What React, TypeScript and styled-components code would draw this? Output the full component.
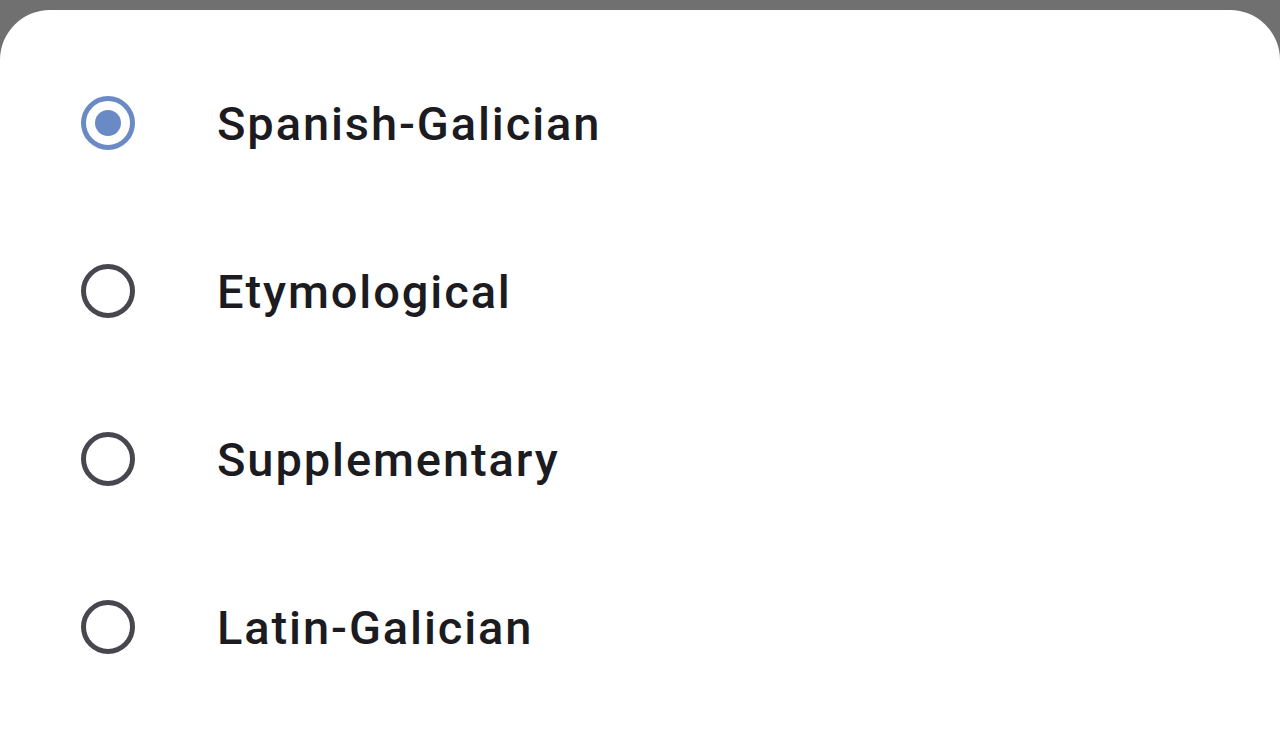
import React, { useState } from 'react';
import styled, { createGlobalStyle } from 'styled-components';

const GlobalStyle = createGlobalStyle`
  html, body {
    margin: 0;
    padding: 0;
    height: 100%;
    overflow: hidden;
    background: #707070;
  }
  #root {
    height: 100%;
  }
`;

const options = ['Spanish-Galician', 'Etymological', 'Supplementary', 'Latin-Galician'];

const Screen = styled.div`
  height: 100%;
  padding-top: 10px;
  box-sizing: border-box;
  display: flex;
  flex-direction: column;
`;

const Sheet = styled.div`
  flex: 1;
  background: #ffffff;
  border-radius: 50px 50px 0 0;
  padding-top: 29px;
  display: flex;
  flex-direction: column;
`;

const Row = styled.label`
  height: 168px;
  display: flex;
  align-items: center;
  padding-left: 81px;
  cursor: pointer;
`;

const Radio = styled.span<{ checked: boolean }>`
  width: 54px;
  height: 54px;
  box-sizing: border-box;
  border-radius: 50%;
  border: 5px solid ${p => (p.checked ? '#6a8ac6' : '#48464f')};
  display: flex;
  align-items: center;
  justify-content: center;
  flex-shrink: 0;
  margin-right: 82px;

  &::after {
    content: '';
    width: 26px;
    height: 26px;
    border-radius: 50%;
    background: #6a8ac6;
    display: ${p => (p.checked ? 'block' : 'none')};
  }
`;

const Label = styled.span`
  font-family: Roboto, 'Noto Sans', sans-serif;
  font-size: 47px;
  font-weight: 500;
  letter-spacing: 1.9px;
  color: #1c1b1f;
`;

export default function App() {
  const [selected, setSelected] = useState(0);

  return (
    <>
      <GlobalStyle />
      <Screen>
        <Sheet>
          {options.map((opt, i) => (
            <Row key={opt} onClick={() => setSelected(i)}>
              <Radio checked={selected === i} />
              <Label>{opt}</Label>
            </Row>
          ))}
        </Sheet>
      </Screen>
    </>
  );
}
